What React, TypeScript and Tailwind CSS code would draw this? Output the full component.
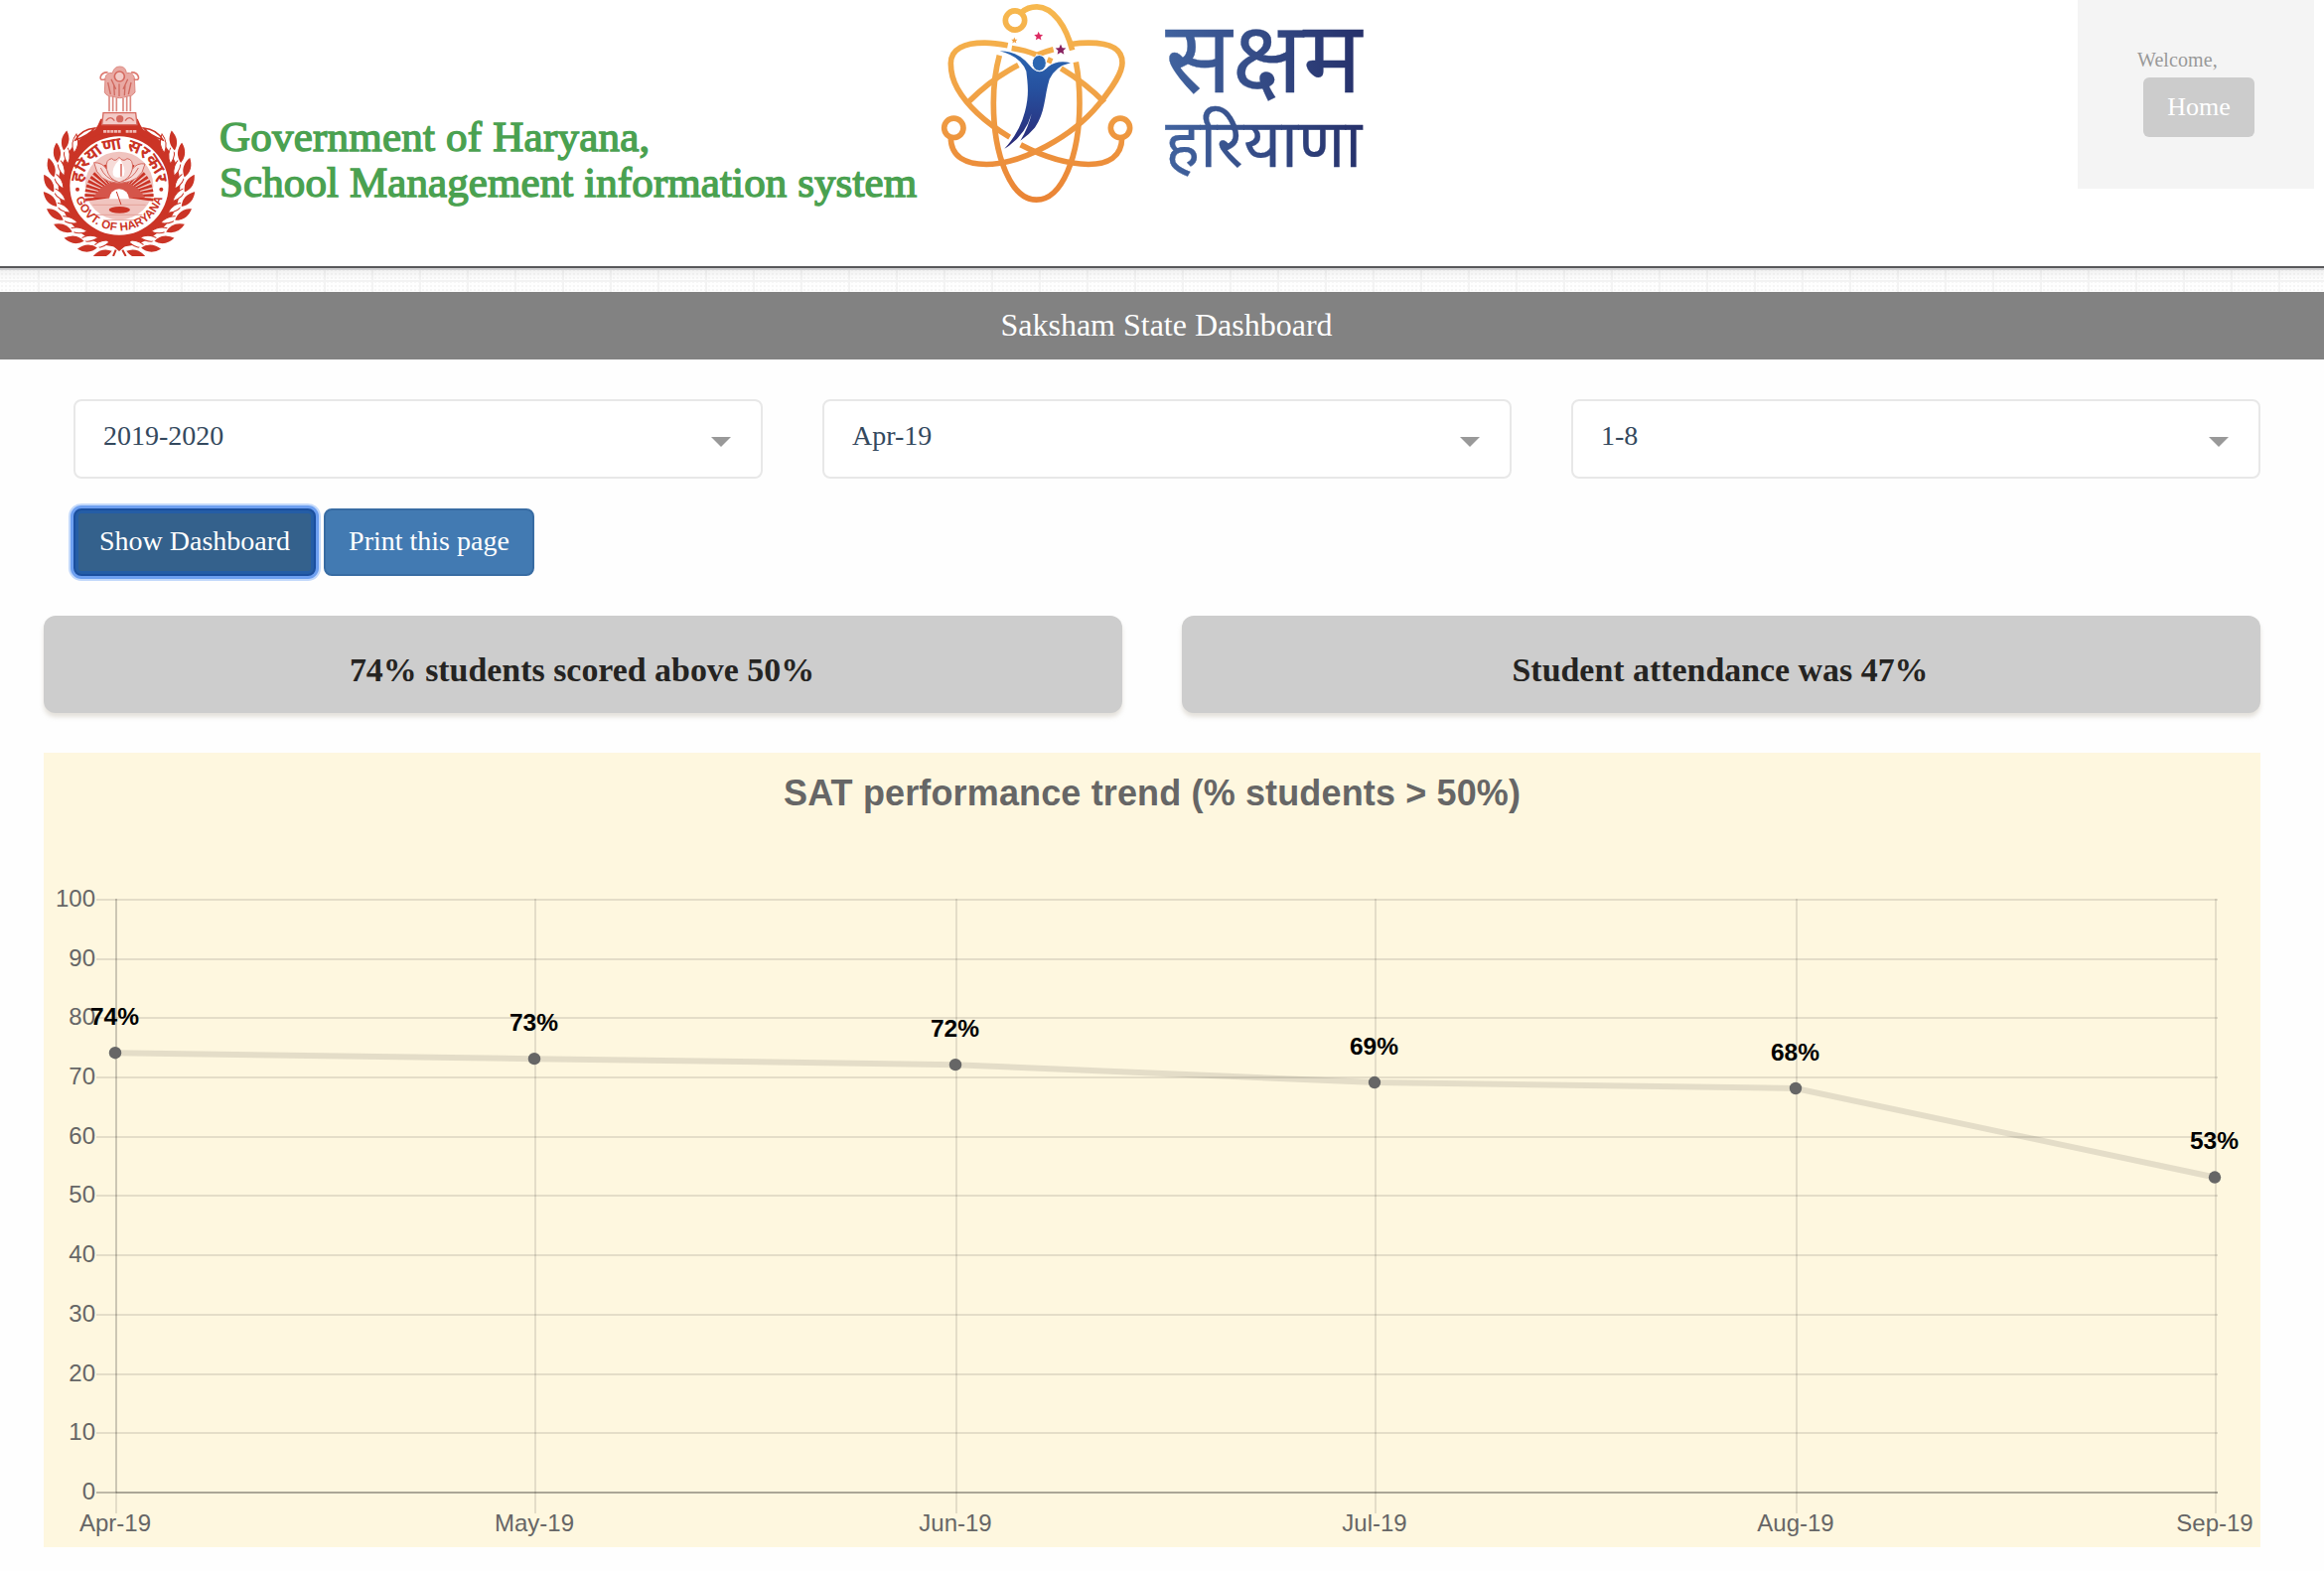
const AXIS_TOP = 148;
const AXIS_STEP = 59.69;
const xs = [73, 495, 919, 1341, 1765, 2187];
const data = [
  { month: "Apr-19", value: 74 },
  { month: "May-19", value: 73 },
  { month: "Jun-19", value: 72 },
  { month: "Jul-19", value: 69 },
  { month: "Aug-19", value: 68 },
  { month: "Sep-19", value: 53 },
];
const yOf = (v: number) => AXIS_TOP - 1 + ((100 - v) / 10) * AXIS_STEP;

// Leaf positions around the seal, in degrees clockwise from straight down.
const outerLeaves = [6, 19, 32, 45, 58, 71, 84, 97, 110, 122];
const innerLeaves = [10, 23, 36, 49, 62, 75, 88, 101, 114, 127];

function Wreath() {
  return (
    <g>
      {innerLeaves.map((a) => (
        <path
          key={a}
          d="M4 0Q-26 -17 -54 0Q-26 17 4 0Z"
          transform={`rotate(${a} 360 442) translate(360 612) rotate(-30)`}
          fill="#fff"
          stroke="#cb3426"
          strokeWidth="3"
        />
      ))}
      {outerLeaves.map((a) => (
        <path
          key={a}
          d="M2 0Q-30 -26 -66 0Q-30 26 2 0Z"
          transform={`rotate(${a} 360 442) translate(360 640) rotate(-23)`}
          fill="#cb3426"
          stroke="#fff"
          strokeWidth="4"
        />
      ))}
    </g>
  );
}

function Emblem() {
  const rays = Array.from({ length: 25 }, (_, i) => -96 + i * 8);
  return (
    <svg viewBox="120 70 480 585" className="h-[195px] w-[160px] shrink-0">
      <circle cx="360" cy="442" r="184" fill="#cb3426" />
      <Wreath />
      <g transform="translate(720 0) scale(-1 1)">
        <Wreath />
      </g>
      <path d="M228 304Q246 272 286 268Q268 290 228 304Z" fill="#fff" stroke="#cb3426" strokeWidth="5" />
      <path d="M492 304Q474 272 434 268Q452 290 492 304Z" fill="#fff" stroke="#cb3426" strokeWidth="5" />
      <path d="M304 240Q290 278 262 296L262 330H458V296Q430 278 416 240Z" fill="#cb3426" />
      <path d="M300 590L360 640L420 590Z" fill="#cb3426" />
      <path d="M350 636L342 655M370 636L380 655" stroke="#cb3426" strokeWidth="6" />
      <circle cx="360" cy="442" r="166" fill="#cb3426" />
      <circle cx="360" cy="442" r="149" fill="#fff" />
      <circle cx="360" cy="442" r="103" fill="#f0c4bf" />
      <path d="M257 478A104 104 0 0 1 463 478Z" fill="#f4d2ce" />
      {rays.map((a) => (
        <path key={a} d="M359 440L355.500 342H364.500L361 440Z" transform={`rotate(${a} 360 474) translate(0 28)`} fill="#cb3426" />
      ))}
      <path d="M282 478Q310 430 360 430T438 478Z" fill="#d5554a" />
      <path d="M284 372Q310 372 322 392Q318 362 338 360Q348 372 360 356Q372 372 384 360Q404 362 400 392Q414 372 438 376Q428 432 360 434Q294 432 284 372Z" fill="#f6dbd8" stroke="#d5695f" strokeWidth="3" />
      <path d="M322 392Q330 424 360 432Q392 424 400 392M304 388Q318 420 350 428M418 388Q402 420 370 428" fill="none" stroke="#d5695f" strokeWidth="3" />
      <path d="M362 362Q336 388 342 410Q350 424 374 412Q382 390 362 362Z" fill="#fff" />
      <path d="M366 376V414" stroke="#d5554a" strokeWidth="4" />
      <path d="M330 482A30 30 0 0 1 390 482Z" fill="#fff" />
      <path d="M352 460L366 500" stroke="#cb3426" strokeWidth="3" />
      <ellipse cx="361" cy="515" rx="32" ry="10" fill="#cb3426" />
      <path d="M280 500H440M290 530H430M312 546H408" stroke="#e5a39c" strokeWidth="3" />
      <path id="sealBottom" d="M224 442A136 136 0 0 0 496 442" fill="none" />
      <path id="sealTop" d="M249 460A112 112 0 1 1 471 460" fill="none" />
      <text fontFamily="Liberation Sans" fontWeight="700" fontSize="35" fill="#cb3426">
        <textPath href="#sealBottom" startOffset="38" textLength="352">GOVT. OF HARYANA</textPath>
      </text>
      <text fontFamily="Noto Sans Devanagari, sans-serif" fontWeight="700" fontSize="52" fill="#cb3426" textAnchor="middle">
        <textPath href="#sealTop" startOffset="50%">हरियाणा सरकार</textPath>
      </text>
      <circle cx="234" cy="453" r="6" fill="#cb3426" />
      <circle cx="487" cy="453" r="6" fill="#cb3426" />
      <path d="M312 278H366M380 278H414" stroke="#f0b8b2" strokeWidth="8" strokeDasharray="9 2" />
      <path d="M312 222H410L414 258H308Z" fill="#f3cbc7" stroke="#d5695f" strokeWidth="4" />
      <circle cx="362" cy="240" r="11" fill="#d5695f" />
      <path d="M320 246Q334 228 346 246M378 246Q390 228 404 246" stroke="#d5695f" strokeWidth="4" fill="none" />
      <path d="M330 172V218M341 172V218M352 178V218M372 178V218M383 172V218M394 172V218" stroke="#dd8a82" strokeWidth="5" />
      <path d="M318 116Q322 98 340 102Q344 82 362 82T382 102Q402 98 406 116L408 160Q398 174 384 172Q362 182 340 172Q324 174 316 160Z" fill="#e9a9a3" stroke="#dd8a82" strokeWidth="3" />
      <circle cx="361" cy="112" r="15" fill="#f3cbc7" stroke="#d5695f" strokeWidth="5" />
      <path d="M318 120Q300 126 304 112Q310 98 326 100M404 120Q422 126 418 112Q412 98 396 100" stroke="#dd7a71" strokeWidth="5" fill="none" />
      <path d="M326 130L334 166M344 136L346 170M360 134V172M378 136L376 170M396 130L388 166M336 120L350 150M386 120L372 150" stroke="#d0695f" strokeWidth="4" />
    </svg>
  );
}

function Star({ x, y, r, fill }: { x: number; y: number; r: number; fill: string }) {
  return (
    <path
      transform={`translate(${x} ${y}) scale(${r})`}
      d="M0-1L.28-.36L.95-.31L.45.14L.59.81L0 .46L-.59.81L-.45.14L-.95-.31L-.28-.36Z"
      fill={fill}
    />
  );
}

function SakshamLogo() {
  return (
    <svg viewBox="83 11 1275 596" className="h-[199px] w-[425px] shrink-0 overflow-visible">
      <defs>
        <linearGradient id="orbit" gradientUnits="userSpaceOnUse" x1="0" y1="10" x2="0" y2="600">
          <stop offset="0" stopColor="#f7b94f" />
          <stop offset=".5" stopColor="#f0a045" />
          <stop offset="1" stopColor="#ea8435" />
        </linearGradient>
        <linearGradient id="figure" gradientUnits="userSpaceOnUse" x1="0" y1="150" x2="0" y2="440">
          <stop offset="0" stopColor="#2b66b1" />
          <stop offset=".4" stopColor="#26519f" />
          <stop offset="1" stopColor="#2b2a78" />
        </linearGradient>
        <linearGradient id="word" gradientUnits="userSpaceOnUse" x1="760" y1="0" x2="1356" y2="0">
          <stop offset="0" stopColor="#41639f" />
          <stop offset="1" stopColor="#26316b" />
        </linearGradient>
      </defs>
      <g fill="none" stroke="url(#orbit)" strokeWidth="17">
        <circle cx="308" cy="60" r="29" />
        <circle cx="123" cy="385" r="29" />
        <circle cx="626" cy="385" r="29" />
        <path d="M328 36Q346 19 374 19C424 20 462 78 481 150" />
        <path d="M492 186C500 226 503 268 503 310C503 470 450 602 373 602C296 602 243 470 243 310C243 250 250 206 261 166" />
        <path d="M114 414C114 474 162 495 222 495C330 494 482 410 560 315C606 258 632 218 632 188C632 142 592 128 530 128Q504 128 476 132" />
        <path d="M424 148Q400 154 376 164" />
        <path d="M318 195C266 222 212 262 168 306" />
        <path d="M631 414C631 474 586 495 530 495C470 494 394 472 325 436" />
        <path d="M292 413C214 366 160 312 134 266C118 238 114 214 114 190C114 146 156 128 216 128Q246 128 286 136" />
        <path d="M298 144Q340 150 372 164" />
        <path d="M406 178L420 184" />
        <path d="M447 205C492 232 540 268 578 308" />
      </g>
      <path d="M262 152Q318 152 352 196Q380 232 408 200Q436 178 476 188Q430 198 412 238C396 290 400 340 368 384Q350 406 324 424Q348 384 358 342Q340 408 276 448Q322 398 338 336C352 282 346 250 342 214Q326 170 262 152Z" fill="url(#figure)" />
      <ellipse cx="381" cy="189" rx="21" ry="24" fill="#2b66b1" stroke="#fff" strokeWidth="3" />
      <Star x={306} y={121} r={10} fill="#f0a045" />
      <Star x={379} y={108} r={14} fill="#dc2a62" />
      <Star x={446} y={149} r={17} fill="#86205e" />
      <g fontFamily="Noto Sans Devanagari, Noto Sans, sans-serif" fill="url(#word)" stroke="url(#word)" strokeWidth="1">
        <text x="762" y="278" fontSize="302" textLength="594" lengthAdjust="spacingAndGlyphs">सक्षम</text>
        <text x="762" y="503" fontSize="204" textLength="594" lengthAdjust="spacingAndGlyphs">हरियाणा</text>
      </g>
    </svg>
  );
}

function Header() {
  return (
    <header className="flex h-[268px] items-start bg-white pl-10 pr-[10px]">
      <div className="pt-[63px]">
        <Emblem />
      </div>
      <div className="ml-[21px] w-[726px] whitespace-nowrap pt-[115px] text-[43px] leading-[46px] text-[#4aa150] [-webkit-text-stroke:1.4px_#4aa150]">
        <div className="tracking-[0.22px]">Government of Haryana,</div>
        <div className="tracking-[0.1px]">School Management information system</div>
      </div>
      <div className="pt-[4px]">
        <SakshamLogo />
      </div>
      <div className="ml-auto h-[190px] w-[238px] bg-[#f4f4f4] pl-[60px] pt-[48px]">
        <div className="text-[20px] leading-[24px] tracking-[0.1px] text-[#999]">Welcome,</div>
        <button className="ml-[6px] mt-[6px] block h-[60px] w-[112px] rounded-[6px] bg-[#ccc] pb-[2px] text-[26px] text-white">Home</button>
      </div>
    </header>
  );
}

function Select({ value }: { value: string }) {
  return (
    <div className="flex h-20 flex-1 items-center justify-between rounded-[8px] border-2 border-[#e8e8e8] bg-white pl-7 pr-[30px]">
      <span className="-mt-[6px] text-[28px] text-[#34495e]">{value}</span>
      <span className="mt-[5px] border-x-[10px] border-t-[10px] border-x-transparent border-t-[#999]" />
    </div>
  );
}

function Card({ text }: { text: string }) {
  return (
    <div className="flex h-[98px] flex-1 items-center justify-center rounded-[12px] bg-[#cdcdcd] pr-[2px] pt-[12px] text-[33.900px] font-bold text-[#252422] shadow-[0_4px_4px_rgba(204,197,185,0.5)]">
      {text}
    </div>
  );
}

function Chart() {
  return (
    <section className="mt-10 h-[800px] bg-[#fef7df]">
      <svg viewBox="0 0 2232 800" className="block h-[800px] w-[2232px]" fontFamily="Liberation Sans, Arial, sans-serif">
        <text x="1116" y="53" textAnchor="middle" fontSize="36" fontWeight="700" fill="#666" textLength="742">
          SAT performance trend (% students &gt; 50%)
        </text>
        {Array.from({ length: 11 }, (_, i) => {
          const y = Math.round(AXIS_TOP + i * AXIS_STEP);
          return (
            <g key={i}>
              <path d={`M53 ${y}H2189`} stroke="#000" strokeOpacity={i === 10 ? 0.25 : 0.1} strokeWidth="2" />
              <text x="52" y={y + 7} textAnchor="end" fontSize="24" fill="#666">
                {100 - i * 10}
              </text>
            </g>
          );
        })}
        <path d="M73 745H2189" stroke="#000" strokeOpacity="0.1" strokeWidth="2" />
        {xs.map((x, i) => (
          <g key={x}>
            <path d={`M${x} 147V766`} stroke="#000" strokeOpacity="0.1" strokeWidth="2" />
            {i === 0 && <path d="M73 147V745" stroke="#000" strokeOpacity="0.1" strokeWidth="2" />}
            <text x={x - 1} y="784" textAnchor="middle" fontSize="24" fill="#666">
              {data[i].month}
            </text>
          </g>
        ))}
        <polyline
          points={data.map((d, i) => `${xs[i] - 1},${yOf(d.value)}`).join(" ")}
          fill="none"
          stroke="#000"
          strokeOpacity="0.1"
          strokeWidth="6"
        />
        {data.map((d, i) => (
          <g key={d.month}>
            <circle cx={xs[i] - 1} cy={yOf(d.value)} r="6.200" fill="#666" />
            <text x={xs[i] - 1.5} y={yOf(d.value) - 28.5} textAnchor="middle" fontSize="24.500" fontWeight="700" fill="#000">
              {d.value}%
            </text>
          </g>
        ))}
      </svg>
    </section>
  );
}

export default function App() {
  return (
    <div className="h-[1582px] w-[2340px] overflow-hidden bg-[#fefefe] font-['Liberation_Serif',serif]">
      <Header />
      <div className="h-[26px] border-t-2 border-[#58585a] bg-[linear-gradient(#d0d0d2_0_2px,transparent_2px),linear-gradient(rgba(0,0,0,0.06),transparent_12px),linear-gradient(90deg,#f3f3f3_2px,transparent_2px),linear-gradient(transparent_12px,#f3f3f3_12px_14px,transparent_14px),radial-gradient(#f6f6f6_1px,transparent_1px)] bg-[size:100%_24px,100%_24px,48px_24px,48px_24px,4px_4px] bg-[position:0_0,0_0,38px_0,0_0,0_0]" />
      <div className="flex h-[68px] items-center justify-center bg-[#828282] pb-[2px] pl-[9px] text-[32px] text-white">
        Saksham State Dashboard
      </div>
      <main className="px-11 pr-16">
        <div className="flex gap-[60px] pl-[30px] pt-10">
          <Select value="2019-2020" />
          <Select value="Apr-19" />
          <Select value="1-8" />
        </div>
        <div className="flex gap-2 pl-[30px] pt-[30px]">
          <button className="h-[68px] w-[244px] rounded-[8px] border-2 border-[#1a4f9f] bg-[#34618c] pb-[2px] text-[28px] text-white shadow-[inset_0_0_0_3px_#245da6,0_0_0_3px_#6d9ff0,0_0_0_5px_#c3d9fb]">
            Show Dashboard
          </button>
          <button className="h-[68px] w-[212px] rounded-[8px] border-2 border-[#386ca3] bg-[#427ab2] pb-[2px] text-[28px] text-white">
            Print this page
          </button>
        </div>
        <div className="mt-10 flex gap-[60px]">
          <Card text="74% students scored above 50%" />
          <Card text="Student attendance was 47%" />
        </div>
        <Chart />
      </main>
    </div>
  );
}
